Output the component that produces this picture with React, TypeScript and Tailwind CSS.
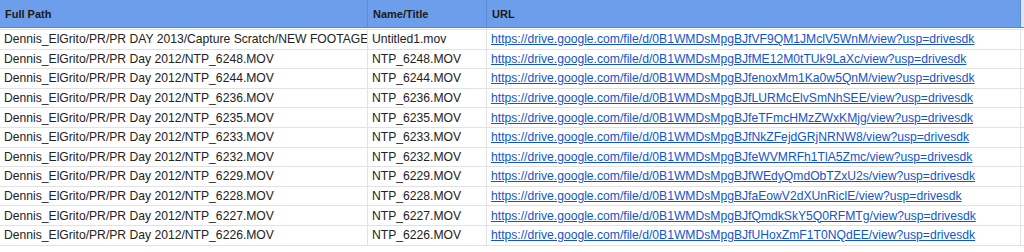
import React from 'react';

type Row = { path: string; name: string; id: string };

const rows: Row[] = [
  { path: 'Dennis_ElGrito/PR/PR DAY 2013/Capture Scratch/NEW FOOTAGE', name: 'Untitled1.mov', id: 'VF9QM1JMclV5WnM' },
  { path: 'Dennis_ElGrito/PR/PR Day 2012/NTP_6248.MOV', name: 'NTP_6248.MOV', id: 'ME12M0tTUk9LaXc' },
  { path: 'Dennis_ElGrito/PR/PR Day 2012/NTP_6244.MOV', name: 'NTP_6244.MOV', id: 'enoxMm1Ka0w5QnM' },
  { path: 'Dennis_ElGrito/PR/PR Day 2012/NTP_6236.MOV', name: 'NTP_6236.MOV', id: 'LURMcElvSmNhSEE' },
  { path: 'Dennis_ElGrito/PR/PR Day 2012/NTP_6235.MOV', name: 'NTP_6235.MOV', id: 'eTFmcHMzZWxKMjg' },
  { path: 'Dennis_ElGrito/PR/PR Day 2012/NTP_6233.MOV', name: 'NTP_6233.MOV', id: 'NkZFejdGRjNRNW8' },
  { path: 'Dennis_ElGrito/PR/PR Day 2012/NTP_6232.MOV', name: 'NTP_6232.MOV', id: 'eWVMRFh1TlA5Zmc' },
  { path: 'Dennis_ElGrito/PR/PR Day 2012/NTP_6229.MOV', name: 'NTP_6229.MOV', id: 'WEdyQmdObTZxU2s' },
  { path: 'Dennis_ElGrito/PR/PR Day 2012/NTP_6228.MOV', name: 'NTP_6228.MOV', id: 'aEowV2dXUnRiclE' },
  { path: 'Dennis_ElGrito/PR/PR Day 2012/NTP_6227.MOV', name: 'NTP_6227.MOV', id: 'QmdkSkY5Q0RFMTg' },
  { path: 'Dennis_ElGrito/PR/PR Day 2012/NTP_6226.MOV', name: 'NTP_6226.MOV', id: 'UHoxZmF1T0NQdEE' },
];

const cols = 'grid grid-cols-[368px_119px_534px_3px]';

const HeaderCell: React.FC<{ children?: React.ReactNode }> = ({ children }) => (
  <div className="flex items-end h-full px-[5px] pb-[5px] text-[11px] font-bold text-[#1a1a1a] border-r border-[#5d8bd6]">
    {children}
  </div>
);

const Cell: React.FC<{ children?: React.ReactNode }> = ({ children }) => (
  <div className="flex items-center h-[19.6px] px-[4px] overflow-hidden whitespace-nowrap border-r border-b border-[#e2e2e2]">
    {children}
  </div>
);

export default function App() {
  return (
    <div className="w-[1024px] h-[252px] overflow-hidden bg-white font-['Liberation_Sans',Arial,sans-serif] text-[12.15px] text-[#222]">
      <div className={`${cols} h-[28px] bg-[#6d9eeb] border-b border-[#5a86cf]`}>
        <HeaderCell>Full Path</HeaderCell>
        <HeaderCell>Name/Title</HeaderCell>
        <HeaderCell>URL</HeaderCell>
        <div className="bg-[#dfe6f3]" />
      </div>
      <div className="h-[2px] border-b border-[#e2e2e2]" />
      {rows.map((r) => (
        <div key={r.name} className={cols}>
          <Cell>{r.path}</Cell>
          <Cell>{r.name}</Cell>
          <Cell>
            <span className="text-[#1155cc] underline">
              {`https://drive.google.com/file/d/0B1WMDsMpgBJf${r.id}/view?usp=drivesdk`}
            </span>
          </Cell>
          <div className="border-b border-[#e2e2e2]" />
        </div>
      ))}
    </div>
  );
}
